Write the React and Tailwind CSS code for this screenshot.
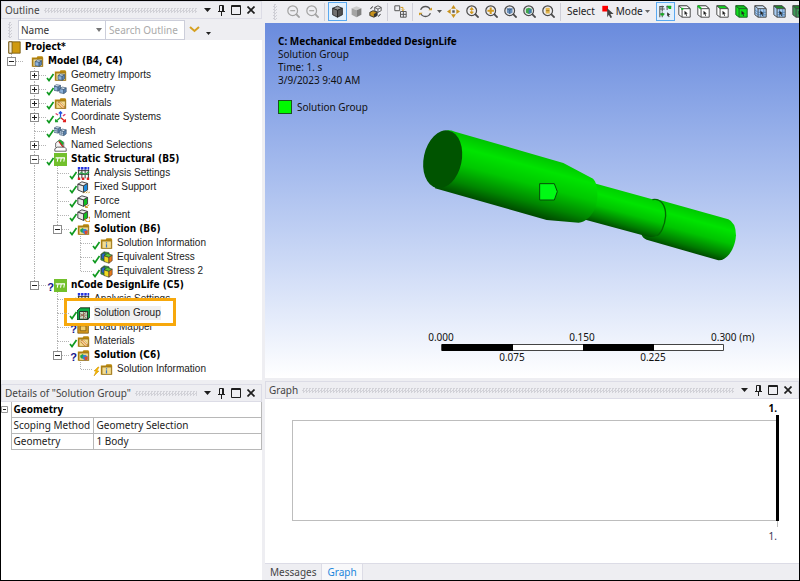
import { useState } from "react";

const TREE = {
  label: "Project*",
  icon: "project",
  bold: true,
  children: [
    {
      label: "Model (B4, C4)",
      icon: "model",
      bold: true,
      children: [
        { label: "Geometry Imports", icon: "model", status: "ok", closed: true },
        { label: "Geometry", icon: "geometry", status: "ok", closed: true },
        { label: "Materials", icon: "materials", status: "ok", closed: true },
        { label: "Coordinate Systems", icon: "axes", status: "ok", closed: true },
        { label: "Mesh", icon: "mesh", status: "ok" },
        { label: "Named Selections", icon: "named", closed: true },
        {
          label: "Static Structural (B5)",
          icon: "system",
          status: "ok",
          bold: true,
          children: [
            { label: "Analysis Settings", icon: "settings", status: "ok" },
            { label: "Fixed Support", icon: "support", status: "ok" },
            { label: "Force", icon: "force", status: "ok" },
            { label: "Moment", icon: "moment", status: "ok" },
            {
              label: "Solution (B6)",
              icon: "solution",
              status: "ok",
              bold: true,
              children: [
                { label: "Solution Information", icon: "info", status: "ok" },
                { label: "Equivalent Stress", icon: "stress", status: "ok" },
                { label: "Equivalent Stress 2", icon: "stress", status: "ok" },
              ],
            },
          ],
        },
        {
          label: "nCode DesignLife (C5)",
          icon: "system",
          status: "unknown",
          bold: true,
          children: [
            { label: "Analysis Settings", icon: "settings", status: "ok" },
            { label: "Solution Group", icon: "group", status: "ok", marked: true },
            { label: "Load Mapper", icon: "mapper", status: "unknown" },
            { label: "Materials", icon: "materials", status: "ok" },
            {
              label: "Solution (C6)",
              icon: "solution",
              status: "unknown",
              bold: true,
              children: [
                { label: "Solution Information", icon: "info", status: "pending" },
              ],
            },
          ],
        },
      ],
    },
  ],
};

function Folder() {
  return (
    <>
      <path d="M1 3h6l1-1.500h6l1 2v11H1z" fill="#b8860b" />
      <path d="M2.500 5h11.500v9H2.500z" fill="#f5dc8c" stroke="#8a6a20" strokeWidth=".8" />
    </>
  );
}

function Block({ x = 0, y = 0, face = "#8fb4dc" }) {
  return (
    <g transform={`translate(${x} ${y})`} stroke="#34506e" strokeWidth=".8" strokeLinejoin="round">
      <path d="M0 2l3-2 5 1-3 2z" fill="#dbe9f7" />
      <path d="M0 2l5 1v5L0 7z" fill={face} />
      <path d="M5 3l3-2v5L5 8z" fill="#5c86b5" />
    </g>
  );
}

function WireCube({ face = "#fff" }) {
  return (
    <g stroke="#444" strokeWidth="1.200" strokeLinejoin="round">
      <path d="M1 4l5-3 7 2-5 3z" fill="#eee" />
      <path d="M1 4l7 2v8l-7-3z" fill="#e8e8e8" />
      <path d="M8 6l5-3v8l-5 3z" fill={face} />
    </g>
  );
}

const TREE_ICONS = {
  project: (
    <>
      <path d="M1 1h14v14H1z" fill="#cf9a10" stroke="#705410" />
      <path d="M1 1h4v14H1z" fill="#f2ead2" stroke="#705410" />
    </>
  ),
  model: (
    <>
      <Folder />
      <Block x={5} y={6} />
    </>
  ),
  geometry: (
    <>
      <Block x={0} y={2} />
      <Block x={7} y={5} />
    </>
  ),
  mesh: (
    <>
      <Block x={0} y={2} face="#d4e4f5" />
      <Block x={7} y={5} face="#d4e4f5" />
      <path d="M2.500 3v6M0 6.500l5 1M9.500 6v6M7 9.500l5 1" stroke="#34506e" strokeWidth=".6" />
    </>
  ),
  materials: (
    <>
      <Folder />
      <path d="M5 6h3l5 5v3h-3L5 9z" fill="#e9a94f" stroke="#8c5a1c" strokeWidth=".6" />
      <path d="M5 7l6 6M8 6.500l4.500 4.500" stroke="#fff" strokeWidth=".9" />
    </>
  ),
  axes: (
    <g fill="none" strokeWidth="1.600">
      <path d="M8 8V1M6 3l2-2 2 2" stroke="#2050e0" />
      <path d="M8 8l6 5M14 10v3h-3" stroke="#e02020" />
      <path d="M8 8l-6 5M2 10v3h3" stroke="#20a030" />
      <path d="M2 3l3 2M14 4l-3 2" stroke="#dd3b66" />
      <circle cx="8" cy="8" r="1" fill="#30b0c0" stroke="none" />
    </g>
  ),
  named: (
    <>
      <path d="M2 5l5-4 5 3v7l-6 2-4-3z" fill="#f4f4f4" stroke="#555" />
      <path d="M5 2l3-1 4 4-2 4z" fill="#18b030" />
      <path d="M6 3l6 8" stroke="#c22" strokeWidth="1.500" />
      <path d="M1 12l3-2h9l2 2v3H1z" fill="#fff" stroke="#444" />
    </>
  ),
  system: (
    <>
      <path d="M0 0h16v16H0z" fill="#72c02c" />
      <path d="M2 6h11.500M5 6l-1 4.500M9 6l-1 4.500M13 6l-1 4.500" stroke="#fff" strokeWidth="1.300" fill="none" />
    </>
  ),
  settings: (
    <>
      <path d="M2 3v11M6 3v11M10 3v11M14 3v11M1 4.500h14M1 9h14" stroke="#333" strokeWidth="1.200" />
      <path d="M1 10l4-3 5 2 5-3" stroke="#27a043" fill="none" strokeWidth="1.500" />
      <path d="M1 0h3v3H1zM5 0h3v3H5zM9 0h3v3H9zM13 0h2v3h-2z" fill="#2030e0" />
      <path d="M1 13h3v3H1zM6 13h3v3H6zM12 13h3v3h-3z" fill="#e02020" />
    </>
  ),
  support: (
    <>
      <WireCube face="#1b8be0" />
      <path d="M8 15l2-2M11 15l2-2M14 15l2-2" stroke="#c8901c" strokeWidth="1.200" />
    </>
  ),
  force: (
    <>
      <WireCube face="#10c020" />
      <path d="M15 12l-4 3M10.500 13v2.500h3" stroke="#c8901c" strokeWidth="1.200" fill="none" />
    </>
  ),
  moment: (
    <>
      <WireCube face="#10c020" />
      <path d="M14.500 10a3 3 0 1 1-4 2" stroke="#e09a1c" strokeWidth="1.400" fill="none" />
    </>
  ),
  solution: (
    <>
      <Folder />
      <path d="M4 8l3-2 2 2v3l-3 1-2-2z" fill="#20a84a" />
      <path d="M7 8l3-1 3 2v4l-3 1-3-2z" fill="#3a7fd8" />
      <path d="M9 10l4-1v4l-3 1z" fill="#e04a2a" />
    </>
  ),
  info: (
    <>
      <Folder />
      <path d="M8 6.500v1.500M8 9v4" stroke="#3c78c8" strokeWidth="1.500" />
    </>
  ),
  stress: (
    <g stroke="#333" strokeWidth=".7">
      <path d="M1 4l4-3 6 1 1 4-6 7-5-2z" fill="#28a838" />
      <path d="M2 4l4-2v9L2 9z" fill="#2868d0" />
      <path d="M5 6l4-3 6 2-4 3z" fill="#58c838" />
      <path d="M5 6l6 2v7l-6-2z" fill="#f0dc20" />
      <path d="M11 8l4-3v7l-4 3z" fill="#e87818" />
    </g>
  ),
  group: (
    <>
      <path d="M0 5l4-4h12v11l-3 4H0z" fill="#0cb046" stroke="#111" />
      <path d="M3 5.500h10V15H3z" fill="#c0dcc4" stroke="#111" />
      <path d="M4 8l8 6M4 12l8-6M8 6v9M4 10h8" stroke="#94604c" />
    </>
  ),
  mapper: (
    <>
      <path d="M1 3h13v12H1z" fill="#d79a1c" stroke="#7d5a12" />
      <path d="M4 6h7v6H4z" fill="#f2cc66" stroke="#7d5a12" />
    </>
  ),
};

function Status({ kind }) {
  if (kind === "unknown") {
    return <span className="w-[7px] text-center text-[11px] leading-3 font-bold text-[#14148c] pt-1">?</span>;
  }
  return (
    <svg className="w-[7px] h-[8px] mt-1 overflow-visible" viewBox="0 0 7 8" fill="none">
      {kind === "ok" && <path d="M0 5l2 2.500L6.500 1" stroke="#109a20" strokeWidth="1.700" />}
      {kind === "pending" && <path d="M5 0L1 4h2L1 9l5-5H4l2-4z" fill="#f5b800" stroke="#d09000" strokeWidth=".5" />}
    </svg>
  );
}

function Guide({ up, down, across, box }) {
  return (
    <svg className="w-[23px] h-[14px] shrink-0" viewBox="0 0 23 14" fill="none" shapeRendering="crispEdges">
      <g stroke="#b4b4b4" strokeDasharray="1 1">
        {up && <path d="M10.500 0v7" />}
        {down && <path d="M10.500 7v7" />}
        {across && <path d="M11 7.500h12" />}
      </g>
      {box && (
        <>
          <path d="M6.500 3.500h8v8h-8z" fill="#fff" stroke="#8c8c8c" />
          <path d={box === "plus" ? "M8 7.500h5M10.500 5v5" : "M8 7.500h5"} stroke="#222" />
        </>
      )}
    </svg>
  );
}

function TreeNode({ node, trail = [] }) {
  const last = trail.length - 1;
  const box = node.closed ? "plus" : node.children ? "minus" : null;
  return (
    <li>
      <div className={node.marked ? "relative z-10" : ""}>
        {node.marked && (
          <div className="absolute left-[63px] -top-2 w-[112px] h-[28px] border-3 border-[#f7a80c] bg-white" />
        )}
        <div className="relative flex h-[14px] items-center">
          {trail.map((more, i) =>
            i === last ? (
              <Guide key={i} up down={more} across box={box} />
            ) : (
              <Guide key={i} up={more} down={more} />
            )
          )}
          <Status kind={node.status} />
          <svg className="w-[13px] h-[13px] shrink-0 mr-1" viewBox="0 0 16 16" fill="none">
            {TREE_ICONS[node.icon]}
          </svg>
          <span
            className={`whitespace-nowrap text-[10px] leading-[14px] ${node.bold ? "font-['DejaVu_Sans_Condensed','DejaVu_Sans',sans-serif] font-bold text-black" : "text-[#222]"} ${node.marked ? "bg-[#efefef]" : ""}`}
          >
            {node.label}
          </span>
        </div>
      </div>
      {node.children && (
        <ul>
          {node.children.map((child, i) => (
            <TreeNode key={i} node={child} trail={[...trail, i < node.children.length - 1]} />
          ))}
        </ul>
      )}
    </li>
  );
}

function PanelHeader({ title }) {
  return (
    <header className="flex h-[18px] shrink-0 items-center border border-[#dcdce6] bg-[#eeeef2] pl-[3px] pr-1">
      <h2 className="text-[10px] leading-4 text-[#444]">{title}</h2>
      <div className="mx-1 h-[5px] flex-1 bg-[conic-gradient(#d2d2d8_25%,transparent_0_50%,#d2d2d8_0_75%,transparent_0)] bg-[length:3px_3px]" />
      <div className="flex items-center gap-px text-[#1e1e1e]">
        <button aria-label="Panel menu" className="flex w-[13px] justify-center">
          <svg className="w-[7px] h-1" viewBox="0 0 7 4" fill="currentColor"><path d="M0 0h7L3.500 4z" /></svg>
        </button>
        <button aria-label="Pin" className="flex w-[13px] justify-center">
          <svg className="w-[9px] h-[11px]" viewBox="0 0 9 11" fill="none" stroke="currentColor"><path d="M2.500.5h4v6h-4zM5.500 1v5M1 6.500h7M4.500 7v4" /></svg>
        </button>
        <button aria-label="Maximize" className="flex w-[14px] justify-center">
          <svg className="w-[10px] h-[10px]" viewBox="0 0 10 10" fill="none" stroke="currentColor"><path d="M.5.5h9v9h-9zM1 1.500h8" /></svg>
        </button>
        <button aria-label="Close" className="flex w-[13px] justify-center">
          <svg className="w-2 h-2" viewBox="0 0 8 8" fill="none" stroke="currentColor" strokeWidth="1.700"><path d="M.5.5l7 7M7.500.5l-7 7" /></svg>
        </button>
      </div>
    </header>
  );
}

function Grip() {
  return (
    <div className="h-4 w-1 shrink-0 bg-[conic-gradient(#cfcfd6_25%,transparent_0_50%,#cfcfd6_0_75%,transparent_0)] bg-[length:3px_3px]" />
  );
}

function Outline() {
  const [query, setQuery] = useState("");
  return (
    <section className="flex flex-1 flex-col">
      <PanelHeader title="Outline" />
      <div className="flex h-[21px] shrink-0 items-center bg-[#eeeef2] pl-[7px]">
        <Grip />
        <div className="relative ml-[6px] h-[20px] w-[88px]">
          <select
            aria-label="Search by"
            className="block h-[20px] w-full appearance-none border border-[#ccceda] bg-white py-0 pl-[2px] text-[10px] leading-[18px] text-[#333]"
          >
            <option>Name</option>
          </select>
          <svg className="pointer-events-none absolute right-1 top-2 w-[6px] h-1" viewBox="0 0 6 4" fill="#777"><path d="M0 0h6L3 4z" /></svg>
        </div>
        <input
          aria-label="Search Outline"
          placeholder="Search Outline"
          value={query}
          onChange={(e) => setQuery(e.target.value)}
          className="h-[20px] w-[79px] border border-l-0 border-[#ccceda] bg-white pl-[3px] text-[10px] text-[#333] placeholder:text-[#aaa]"
        />
        <button aria-label="Expand" className="ml-1">
          <svg className="w-[11px] h-[7px]" viewBox="0 0 11 7" fill="none" stroke="#d5a021" strokeWidth="2"><path d="M1 1l4.500 4L10 1" /></svg>
        </button>
        <button aria-label="More options" className="ml-[6px] mt-2">
          <svg className="w-[5px] h-[3px]" viewBox="0 0 5 3" fill="#222"><path d="M0 0h5L2.500 3z" /></svg>
        </button>
      </div>
      <ul className="flex-1 bg-white font-['Liberation_Sans',sans-serif]">
        <TreeNode node={TREE} />
      </ul>
    </section>
  );
}

function Details() {
  return (
    <section className="flex h-[196px] shrink-0 flex-col bg-white">
      <PanelHeader title={'Details of "Solution Group"'} />
      <table className="w-full border-collapse text-left text-[10px] leading-[15px] text-[#222]">
        <tbody>
          <tr>
            <td className="w-[10px] p-0">
              <svg className="w-[7px] h-[7px]" viewBox="0 0 7 7" fill="none"><path d="M.5.5h6v6h-6z" stroke="#999" /><path d="M2 3.500h3" stroke="#222" /></svg>
            </td>
            <th colSpan={2} className="border border-t-0 border-[#b8b8b8] px-[2px] py-0 font-bold text-black">Geometry</th>
          </tr>
          <tr>
            <td className="p-0" />
            <th className="w-[82px] whitespace-nowrap border border-[#b8b8b8] px-[2px] py-0 font-normal">Scoping Method</th>
            <td className="border border-[#b8b8b8] px-[3px] py-0">Geometry Selection</td>
          </tr>
          <tr>
            <td className="p-0" />
            <th className="border border-[#b8b8b8] px-[2px] py-0 font-normal">Geometry</th>
            <td className="border border-[#b8b8b8] px-[3px] py-0">1 Body</td>
          </tr>
        </tbody>
      </table>
    </section>
  );
}

function Lens({ muted, children }) {
  const color = muted ? "#a2a2a2" : "#4a4a4a";
  return (
    <>
      <circle cx="7" cy="7" r="6" stroke={color} strokeWidth="1.500" />
      <path d="M11 11l4.500 4.500" stroke={color} strokeWidth="2.200" />
      {children}
    </>
  );
}

function SolidCube({ top, left, right, line }) {
  return (
    <g stroke={line} strokeWidth="1" strokeLinejoin="round">
      <path d="M2 4l6-2.500L14 4 8 6.500z" fill={top} />
      <path d="M2 4l6 2.500V15l-6-3z" fill={left} />
      <path d="M8 6.500L14 4v8l-6 3z" fill={right} />
    </g>
  );
}

function PickCube({ body = "#fff", top = "#fff", line = "#4a4a4a", children }) {
  return (
    <>
      <path d="M1 1h10l4 3.500V15H5l-4-3z" fill={body} stroke={line} strokeWidth="1.200" />
      <path d="M1 1h10l4 3.500H5z" fill={top} stroke={line} strokeWidth="1.200" />
      <path d="M5 4.500V15" stroke={line} strokeWidth="1.200" />
      {children}
      <path d="M8 7l4 3.500-1.800.2 1 2.300-1 .4-1-2.300L8 12z" fill="#222" />
    </>
  );
}

function ToolButton({ label, active, children }) {
  return (
    <button
      aria-label={label}
      className={`flex h-[19px] w-[19px] shrink-0 items-center justify-center ${active ? "border border-[#5aa9f0] bg-[#e2f0fc]" : ""}`}
    >
      <svg className="w-[13px] h-[13px]" viewBox="0 0 16 16" fill="none">{children}</svg>
    </button>
  );
}

function Divider() {
  return <div className="mr-[3px] ml-[2px] h-[18px] w-px shrink-0 bg-[#cfcfd8]" />;
}

function Toolbar() {
  return (
    <div className="flex h-[22px] shrink-0 items-center overflow-hidden bg-[#eeeef2] pb-px pl-2">
      <Grip />
      <div className="w-[7px] shrink-0" />
      <ToolButton label="Zoom out"><Lens muted><path d="M4 7h6" stroke="#a2a2a2" strokeWidth="1.500" /></Lens></ToolButton>
      <ToolButton label="Zoom previous"><Lens muted><path d="M4 7h6" stroke="#a2a2a2" strokeWidth="1.500" /></Lens></ToolButton>
      <Divider />
      <ToolButton label="Shaded with edges" active><SolidCube top="#999" left="#707070" right="#505050" line="#222" /></ToolButton>
      <ToolButton label="Shaded"><SolidCube top="#ccc" left="#a4a4a4" right="#808080" line="none" /></ToolButton>
      <ToolButton label="Wireframe">
        <path d="M7 3l4-2 4 2v4l-4 2-4-2zM7 3l4 2 4-2M11 5v4" stroke="#444" />
        <path d="M1 9l4-2 5 2v4l-4 2-5-2z" fill="#c8921c" stroke="#222" />
        <path d="M6 11l4-2v4l-4 2z" fill="#333" />
        <path d="M5 2a4 4 0 0 0-3 3M14 11a4 4 0 0 1-3 3" stroke="#333" strokeWidth="1.200" />
      </ToolButton>
      <Divider />
      <ToolButton label="Fit selection">
        <path d="M1 1h6v6H1zM8 8h7v7H8zM8 11.500h7M11.500 8v7" stroke="#555" strokeWidth="1.200" />
        <path d="M8 3h3v4M9.500 5.500L11 7l1.500-1.500" stroke="#d09a20" strokeWidth="1.200" />
      </ToolButton>
      <Divider />
      <ToolButton label="Rotate">
        <path d="M2 6a6.400 6.400 0 0 1 12 0M14 10a6.400 6.400 0 0 1-12 0" stroke="#555" strokeWidth="1.600" />
        <path d="M11.500 6.500h4.500V3zM4.500 9.500H0V13z" fill="#d09a20" />
      </ToolButton>
      <button aria-label="Rotate options" className="flex w-[9px] shrink-0 justify-center">
        <svg className="w-[5px] h-[3px]" viewBox="0 0 5 3" fill="#555"><path d="M0 0h5L2.500 3z" /></svg>
      </button>
      <ToolButton label="Pan">
        <path d="M8 0l3 4.500H5zM8 16l3-4.500H5zM0 8l4.500-3v6zM16 8l-4.500-3v6z" fill="#c8921c" />
        <path d="M6.500 6.500h3v3h-3z" fill="#555" />
      </ToolButton>
      <ToolButton label="Zoom"><Lens><path d="M7 3l2 2.500H5zM7 11l2-2.500H5zM7 5v4" fill="#d09a20" stroke="#d09a20" /></Lens></ToolButton>
      <ToolButton label="Zoom in"><Lens><path d="M7 3v8M3 7h8" stroke="#d09a20" strokeWidth="2.500" /></Lens></ToolButton>
      <ToolButton label="Zoom to fit"><Lens><path d="M3.500 4.500L7 3.500l3.500 1v5L7 11 3.500 9.500z" fill="#6a8fba" /><path d="M3.500 4.500L7 6l3.500-1.500M7 6v5" stroke="#3a5c84" /></Lens></ToolButton>
      <ToolButton label="Zoom to selection"><Lens><path d="M3.500 4.500L7 3.500l3.500 1v5L7 11 3.500 9.500z" fill="#3fa84c" /><path d="M7 6l3.500-1.500v5L7 11z" fill="#4676b0" /></Lens></ToolButton>
      <ToolButton label="Box zoom"><Lens><path d="M4.500 3.500h5v7h-5z" fill="#e6b84e" /><path d="M5 7h4" stroke="#8c6a1c" /></Lens></ToolButton>
      <Divider />
      <span className="mr-[3px] shrink-0 px-[3px] text-[10px] text-[#222]">Select</span>
      <button className="flex shrink-0 items-center gap-px pr-[6px] text-[10px] text-[#222]">
        <svg className="w-[14px] h-[13px]" viewBox="0 0 16 16" fill="none">
          <path d="M1 1h7v7H1z" fill="#f00" />
          <path d="M7 4l8 7h-4l2 4-2 1-2-4-2 3z" fill="#444" />
        </svg>
        Mode
        <svg className="ml-px w-[5px] h-[3px]" viewBox="0 0 5 3" fill="#666"><path d="M0 0h5L2.500 3z" /></svg>
      </button>
      <ToolButton label="Smart select" active>
        <path d="M1 15V2h5M4 1v7M1 5h6M9 2h6M10 1v5M1 11h6M4 9v6" stroke="#555" strokeWidth="1.300" />
        <path d="M10 1h5v4h-3zM2 10h4v3H2z" fill="#10b020" />
        <path d="M10 9l4 3-2 .3 1 2.200-1 .5-1-2-1 1z" fill="#333" />
      </ToolButton>
      <ToolButton label="Vertex"><PickCube><path d="M4 3.500h2.500V6H4z" fill="#10c020" /></PickCube></ToolButton>
      <ToolButton label="Edge"><PickCube><path d="M1 1l4 3.500" stroke="#10c020" strokeWidth="2.500" /></PickCube></ToolButton>
      <ToolButton label="Face"><PickCube top="#0fdc1e" /></ToolButton>
      <ToolButton label="Body"><PickCube body="#0fe01e" top="#0fc81e" line="#1c6424" /></ToolButton>
      <ToolButton label="Node"><PickCube body="#a8cdf5" top="#cfe4fa"><path d="M8 5v10M12 5v10M1 6l4 3h10M1 9l4 3h10" stroke="#3f6fa0" strokeWidth=".8" /></PickCube></ToolButton>
      <ToolButton label="Element face"><PickCube body="#a8cdf5" top="#1c8c2c"><path d="M8 5v10M12 5v10M5 9h10M5 12h10" stroke="#3f6fa0" strokeWidth=".8" /></PickCube></ToolButton>
      <ToolButton label="Element"><PickCube body="#3c9c58" top="#1c8c2c" /></ToolButton>
    </div>
  );
}

function Shaft() {
  return (
    <svg className="absolute inset-0 h-full w-full" viewBox="0 0 534 355" preserveAspectRatio="xMidYMid meet" fill="none">
      <defs>
        <linearGradient id="thick" gradientUnits="userSpaceOnUse" x1="330" y1="112" x2="283" y2="284">
          <stop offset="0" stopColor="#00c400" />
          <stop offset=".22" stopColor="#00e400" />
          <stop offset=".5" stopColor="#00c800" />
          <stop offset=".8" stopColor="#008600" />
          <stop offset="1" stopColor="#004c00" />
        </linearGradient>
        <linearGradient id="neck" gradientUnits="userSpaceOnUse" x1="675" y1="245" x2="645" y2="353">
          <stop offset="0" stopColor="#00d000" />
          <stop offset=".25" stopColor="#00e400" />
          <stop offset=".55" stopColor="#00c400" />
          <stop offset=".85" stopColor="#007c00" />
          <stop offset="1" stopColor="#005000" />
        </linearGradient>
        <linearGradient id="tail" gradientUnits="userSpaceOnUse" x1="885" y1="299" x2="851" y2="421">
          <stop offset="0" stopColor="#00c800" />
          <stop offset=".25" stopColor="#00e400" />
          <stop offset=".55" stopColor="#00c400" />
          <stop offset=".85" stopColor="#007c00" />
          <stop offset="1" stopColor="#004c00" />
        </linearGradient>
      </defs>
      <g transform="translate(135 87) scale(.3333)">
        <path d="M768 267L985 328Q1008 338 1008 376C1006 415 982 453 955 451L740 389Q728 384 726 376z" fill="url(#tail)" />
        <path d="M580 219L757 268C782 272 798 290 797 318C794 350 782 372 770 378Q760 382 745 380L556 329z" fill="url(#neck)" />
        <path d="M757 269C785 264 798 290 797 318C794 350 782 372 770 378" stroke="#006a00" strokeWidth="4" />
        <path d="M142 61Q152 60 165 65L490 159L575 204Q584 208 588 222C600 268 586 310 560 328Q552 337 536 338L440 330L105 235z" fill="url(#thick)" />
        <ellipse cx="128" cy="148" rx="57" ry="88" transform="rotate(12 128 148)" fill="#005400" />
        <path d="M419 221h44l9 24-9 25h-44z" fill="#00fa14" stroke="#064c0a" strokeWidth="3" />
      </g>
    </svg>
  );
}

function Ruler() {
  return (
    <svg className="h-[36px] w-[330px]" viewBox="0 0 330 36" fontSize="10" fill="#111" textAnchor="middle">
      <path d="M15.500 14.500h282v6h-282z" fill="#fff" stroke="#444" />
      <path d="M16 14h71v7H16zM157 14h71v7h-71z" fill="#000" />
      <text x="15" y="11">0.000</text>
      <text x="156" y="11">0.150</text>
      <text x="285" y="11" textAnchor="start">0.300 (m)</text>
      <text x="86" y="31">0.075</text>
      <text x="227" y="31">0.225</text>
    </svg>
  );
}

function Viewport() {
  return (
    <section className="relative flex flex-1 flex-col bg-linear-to-b from-[#6a8bdd] to-white pl-[13px]">
      <Shaft />
      <div className="relative pt-[12px] text-[10px] leading-[13px] text-[#111]">
        <h1 className="font-bold text-black">C: Mechanical Embedded DesignLife</h1>
        <p>Solution Group</p>
        <p>Time: 1. s</p>
        <p>3/9/2023 9:40 AM</p>
        <p className="mt-[13px] flex items-center gap-[5px]">
          <span className="h-[14px] w-[14px] border border-[#1c5020] bg-[#00fa00]" />
          Solution Group
        </p>
      </div>
      <div className="relative mt-auto mb-[12px] mr-[43px] flex justify-end">
        <Ruler />
      </div>
    </section>
  );
}

function GraphPanel() {
  const [tab, setTab] = useState("Graph");
  return (
    <section className="flex h-[199px] shrink-0 flex-col bg-white">
      <PanelHeader title="Graph" />
      <div className="flex flex-1 flex-col pr-[20px] pl-[27px] text-[10px] leading-[14px]">
        <div className="pt-[2px] pr-[2px] text-right font-bold text-black">1.</div>
        <div className="flex flex-1 justify-end">
          <div className="mt-[5px] flex-1 border border-r-0 border-[#bdbdbd]" />
          <div className="w-[3px] bg-black" />
        </div>
        <div className="mr-px h-[6px] w-px self-end bg-[#bdbdbd]" />
        <div className="pt-[2px] pr-[2px] pb-[20px] text-right text-[#335]">1.</div>
      </div>
      <nav className="flex h-[17px] shrink-0 border-t border-[#dcdce6] bg-[#eeeef2] text-[10px] leading-4">
        {["Messages", "Graph"].map((name) => (
          <button
            key={name}
            onClick={() => setTab(name)}
            className={`border-r border-[#dcdce6] px-[5px] ${tab === name ? "bg-[#f8f8fa] text-[#1c86dc]" : "text-[#444]"}`}
          >
            {name}
          </button>
        ))}
      </nav>
    </section>
  );
}

export default function App() {
  return (
    <main className="flex h-screen gap-[3px] overflow-hidden border border-black bg-[#eeeef2] font-['Noto_Sans',sans-serif]">
      <div className="flex w-[261px] shrink-0 flex-col gap-[4px]">
        <Outline />
        <Details />
      </div>
      <div className="flex min-w-0 flex-1 flex-col">
        <Toolbar />
        <Viewport />
        <div className="h-[3px] shrink-0" />
        <GraphPanel />
      </div>
    </main>
  );
}
